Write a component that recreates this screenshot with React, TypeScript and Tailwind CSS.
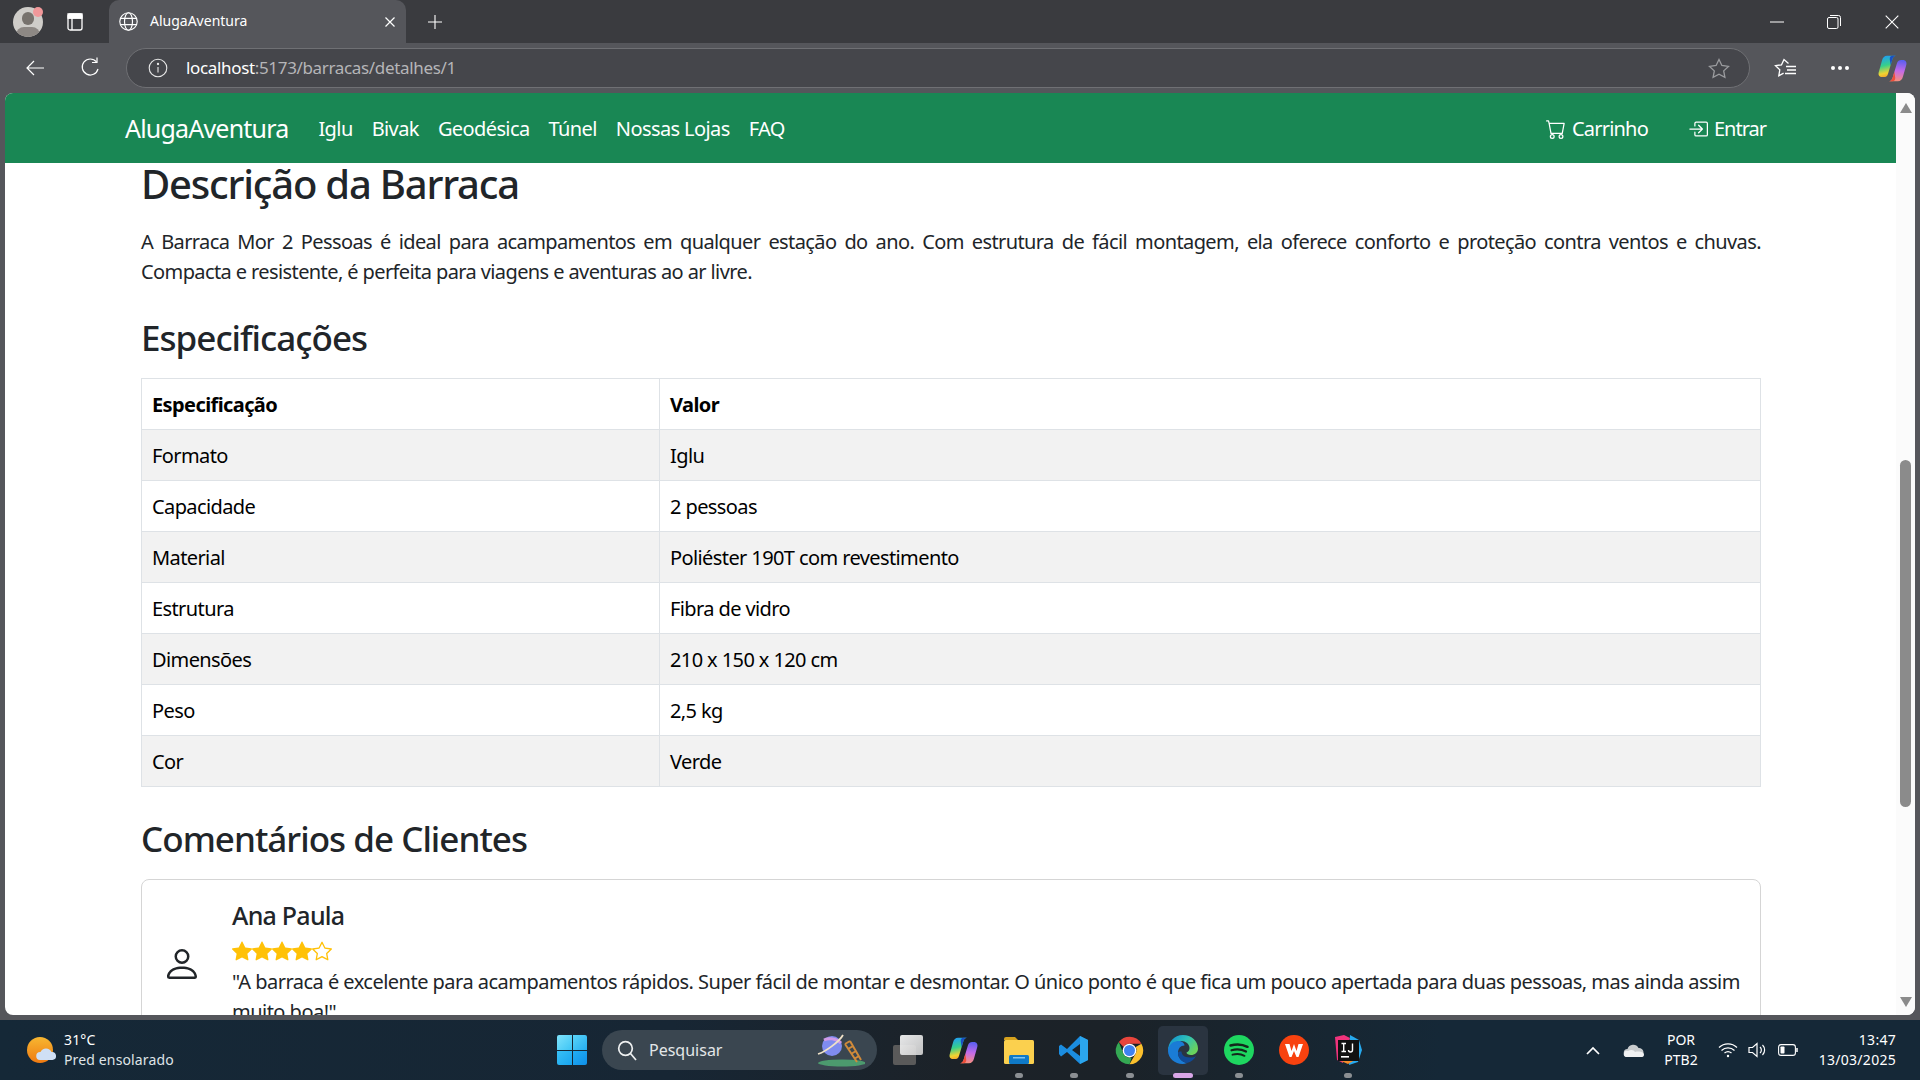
import { BsCart, BsBoxArrowInRight, BsPerson, BsStarFill, BsStar } from "react-icons/bs";

const rows = [
  ["Formato", "Iglu"],
  ["Capacidade", "2 pessoas"],
  ["Material", "Poliéster 190T com revestimento"],
  ["Estrutura", "Fibra de vidro"],
  ["Dimensões", "210 x 150 x 120 cm"],
  ["Peso", "2,5 kg"],
  ["Cor", "Verde"],
];

function Copilot({ size }: { size: number }) {
  return (
    <svg width={size} height={size} viewBox="0 0 32 32">
      <defs>
        <linearGradient id={`cpa${size}`} x1="0.3" y1="0" x2="0.5" y2="1">
          <stop offset="0" stopColor="#1f9df5" />
          <stop offset="0.45" stopColor="#37d08a" />
          <stop offset="0.8" stopColor="#f2d431" />
          <stop offset="1" stopColor="#f5a02a" />
        </linearGradient>
        <linearGradient id={`cpb${size}`} x1="0.5" y1="0" x2="0.4" y2="1">
          <stop offset="0" stopColor="#5a5ff0" />
          <stop offset="0.5" stopColor="#c46ae8" />
          <stop offset="1" stopColor="#f8907a" />
        </linearGradient>
      </defs>
      <path d="M10 2h10c-2 0-3.500 1.500-4.200 4L11 22c-.7 2.500-2.500 3.500-4.500 3.500H4.500C1.500 25.500 0 23 .8 20L4.500 7C5.400 3.800 7.200 2 10 2z" fill={`url(#cpa${size})`} />
      <path d="M22 30H12c2 0 3.500-1.500 4.200-4L21 10c.7-2.500 2.500-3.500 4.500-3.500h2c3 0 4.500 2.500 3.700 5.500l-3.700 13c-.9 3.200-2.700 5-5.500 5z" fill={`url(#cpb${size})`} />
      <path d="M12 30c2 0 3.500-1.500 4.200-4l1.800-6.500 1 6.500c.3 2.500-1 4-3 4z" fill="#ee4f3a" />
      <path d="M20 2c-2 0-3.500 1.500-4.200 4l-1.800 6.500-1-6.500c-.3-2.500 1-4 3-4z" fill="#1a50c4" />
    </svg>
  );
}

function Chrome({ size }: { size: number }) {
  return (
    <svg width={size} height={size} viewBox="0 0 48 48">
      <path d="M24 4a20 20 0 0 1 17.320 10H24a10 10 0 0 0-8.660 5L8.500 11.500A20 20 0 0 1 24 4z" fill="#e8453c" />
      <path d="M41.320 14A20 20 0 0 1 24 44l8.660-15A10 10 0 0 0 33 19z" fill="#fbc02d" />
      <path d="M24 44A20 20 0 0 1 8.500 11.500L15.340 29A10 10 0 0 0 24 34l3 .5z" fill="#34a853" />
      <circle cx="24" cy="24" r="10" fill="#fff" />
      <circle cx="24" cy="24" r="8" fill="#3f82f0" />
    </svg>
  );
}

function Edge({ size }: { size: number }) {
  return (
    <svg width={size} height={size} viewBox="0 0 32 32">
      <defs>
        <linearGradient id="eg1" x1="0" y1="0" x2="1" y2="0.6">
          <stop offset="0" stopColor="#0c8ad8" />
          <stop offset="0.55" stopColor="#2fc1b6" />
          <stop offset="1" stopColor="#6ad35c" />
        </linearGradient>
      </defs>
      <path d="M16 1c8.500 0 15 6 15 13.500 0 4-3.200 6.500-7 6.500-2.500 0-4.500-1-4.500-2.500 2-1 3-2.500 3-4.500 0-4-4-7-8-7C8 7 3 11 1 17 1 8 7 1 16 1z" fill="url(#eg1)" />
      <path d="M1 17c0-6 5-10 10.500-10 3 0 6 2 6 4.500-4 0-6.500 3-6.500 7.500 0 5 4 9 9 10-1.500.7-3 1-4.500 1C8 30 1 24 1 17z" fill="#1a7cd6" />
      <path d="M11 19c0 5 4 9 9 10 4-.8 7-3.500 9-7-1.500 1-3.500 1.500-6 1.500-6 0-8.500-3-8.500-6-2.500 0-3.500 0-3.500 1.500z" fill="#114a96" />
    </svg>
  );
}

function Tab() {
  return (
    <div className="relative ml-[18px] flex h-[43px] w-[297px] items-center rounded-t-[10px] bg-[#55565b] pl-[9px] pr-[8px] text-[14px] text-white">
      <svg width="21" height="21" viewBox="0 0 20 20" fill="none" stroke="#fff" strokeWidth="1.100">
        <circle cx="10" cy="10" r="8.300" />
        <ellipse cx="10" cy="10" rx="3.800" ry="8.300" />
        <path d="M2.300 7h15.400M2.300 13h15.400" />
      </svg>
      <span className="ml-[11px] flex-1 pb-[2px]">AlugaAventura</span>
      <svg width="12" height="12" viewBox="0 0 12 12" stroke="#fff" strokeWidth="1.200" className="mr-[2px]">
        <path d="M1.500 1.500l9 9M10.500 1.500l-9 9" />
      </svg>
    </div>
  );
}

function WinLogo() {
  return (
    <div className="grid h-[30px] w-[30px] grid-cols-2 gap-[1px]">
      <div className="rounded-tl-[2px] bg-[linear-gradient(135deg,#7fe3fb,#3cc4f5)]" />
      <div className="rounded-tr-[2px] bg-[linear-gradient(135deg,#5ad4f8,#25aef2)]" />
      <div className="rounded-bl-[2px] bg-[linear-gradient(135deg,#38c0f5,#18a4ef)]" />
      <div className="rounded-br-[2px] bg-[linear-gradient(135deg,#22aef3,#0f8fe8)]" />
    </div>
  );
}

function Dock({ children, w, dot, pink, active }: { children: React.ReactNode; w: number; dot?: boolean; pink?: boolean; active?: boolean }) {
  return (
    <div
      className={`relative flex h-[49px] shrink-0 items-center justify-center rounded-[5px] ${active ? "bg-[#2a3440]" : ""}`}
      style={{ width: w }}
    >
      {children}
      {dot && <span className="absolute bottom-[-3px] left-1/2 h-[5px] w-[8px] -translate-x-1/2 rounded-full bg-[#8b8f93]" />}
      {pink && <span className="absolute bottom-[-3px] left-1/2 h-[5px] w-[20px] -translate-x-1/2 rounded-full bg-[#d9a6e8]" />}
    </div>
  );
}

export default function App() {
  return (
    <div className="flex h-[1080px] w-[1920px] flex-col overflow-hidden bg-[#55565b] font-['Noto_Sans',sans-serif] text-[#212529]">
      {/* tab strip */}
      <div className="flex h-[43px] shrink-0 items-center bg-[#3a3b3f]">
        <div className="relative ml-[13px] h-[30px] w-[30px] overflow-hidden rounded-full bg-[#cfcdc9]">
          <div className="absolute left-[9px] top-[5px] h-[13px] w-[12px] rounded-full bg-[#77726d]" />
          <div className="absolute left-[3px] top-[20px] h-[16px] w-[24px] rounded-full bg-[#8d8884]" />
        </div>
        <div className="absolute left-[33px] top-[7px] h-[10px] w-[10px] rounded-full bg-[#f1989a]" />
        <div className="ml-[13px] flex w-[38px] justify-center">
          <svg width="16" height="18" viewBox="0 0 16 18" fill="none" stroke="#fff" strokeWidth="1.300">
            <rect x="1" y="1" width="14" height="16" rx="2" />
            <path d="M1 5h14M5 5v12" />
            <path d="M1 1h14v4H1z" fill="#fff" />
          </svg>
        </div>
        <div className="-ml-[3px]">
          <Tab />
        </div>
        <svg width="16" height="16" viewBox="0 0 16 16" stroke="#fff" strokeWidth="1.100" className="ml-[21px]">
          <path d="M8 1v14M1 8h14" />
        </svg>
        <div className="ml-auto flex items-center pr-[21px]">
          <svg width="14" height="2" viewBox="0 0 14 2" stroke="#fff" className="mr-[43px]">
            <path d="M0 1h14" />
          </svg>
          <svg width="14" height="14" viewBox="0 0 14 14" fill="none" stroke="#fff" className="mr-[44px]">
            <rect x="0.500" y="2.500" width="10.500" height="11" rx="1.500" />
            <path d="M3 .5h8.500a2 2 0 0 1 2 2V11" />
          </svg>
          <svg width="14" height="14" viewBox="0 0 14 14" stroke="#fff" strokeWidth="1.100">
            <path d="M.7.7l12.600 12.600M13.300.7L.7 13.300" />
          </svg>
        </div>
      </div>

      {/* toolbar */}
      <div className="flex h-[50px] shrink-0 items-center bg-[#55565b]">
        <svg width="20" height="18" viewBox="0 0 20 18" fill="none" stroke="#fff" strokeWidth="1.200" className="ml-[25px]">
          <path d="M19 9H2M9 2L2 9l7 7" />
        </svg>
        <svg width="20" height="22" viewBox="0 0 20 22" fill="none" stroke="#fff" strokeWidth="1.200" className="ml-[35px]">
          <path d="M16.500 5A8 8 0 1 0 18 12" />
          <path d="M12 5.500h5V.5" />
        </svg>
        <div className="ml-[26px] flex h-[40px] w-[1624px] items-center rounded-full border border-[#6f7074] bg-[#45464b] text-[17px] tracking-[-0.02em]">
          <svg width="20" height="20" viewBox="0 0 20 20" fill="none" stroke="#e8e8e8" strokeWidth="1.100" className="ml-[21px]">
            <circle cx="10" cy="10" r="8.800" />
            <path d="M10 9v5.500" />
            <circle cx="10" cy="6" r=".6" fill="#fff" />
          </svg>
          <span className="ml-[18px] flex-1 pb-[2px] leading-none">
            <span className="text-white">localhost</span>
            <span className="text-[#b5b5b8]">:5173/barracas/detalhes/1</span>
          </span>
          <svg width="22" height="21" viewBox="0 0 22 21" fill="none" stroke="#9b9c9f" strokeWidth="1.300" className="mr-[19px]">
            <path d="M11 1.500l2.900 6 6.600.9-4.800 4.500 1.200 6.500-5.900-3.200-5.900 3.200 1.200-6.500L1.500 8.400l6.600-.9z" />
          </svg>
        </div>
        <svg width="24" height="20" viewBox="0 0 24 20" fill="none" stroke="#fff" strokeWidth="1.300" className="ml-[24px]">
          <path d="M14.500 5.500L10 1.500 7.500 6.800 1.500 7.600l4.300 4.200-1 6 4.800-2.700" />
          <path d="M12 8.500h10M13 12h9M11 15.500h11" />
        </svg>
        <div className="ml-[33px] flex gap-[3px]">
          <span className="h-[4px] w-[4px] rounded-full bg-white" />
          <span className="h-[4px] w-[4px] rounded-full bg-white" />
          <span className="h-[4px] w-[4px] rounded-full bg-white" />
        </div>
        <div className="ml-[29px]">
          <Copilot size={29} />
        </div>
      </div>

      {/* page */}
      <div className="mx-[5px] flex h-[922px] shrink-0 overflow-hidden rounded-[8px] bg-white">
        <div className="flex min-w-0 flex-1 flex-col">
          <nav className="flex h-[70px] shrink-0 items-center bg-[#198754] pl-[120px] pr-[130px] pt-[2px] text-[20px] tracking-[-0.03em] text-white">
            <span className="text-[25px] tracking-[-0.032em]">AlugaAventura</span>
            <div className="ml-[30px] flex gap-[19px]">
              <span>Iglu</span>
              <span>Bivak</span>
              <span>Geodésica</span>
              <span>Túnel</span>
              <span>Nossas Lojas</span>
              <span>FAQ</span>
            </div>
            <div className="ml-auto flex items-center">
              <BsCart size={20} />
              <span className="ml-[6px] tracking-[-0.04em]">Carrinho</span>
              <BsBoxArrowInRight size={20} className="ml-[40px]" />
              <span className="ml-[6px] tracking-[-0.05em]">Entrar</span>
            </div>
          </nav>
          <main className="min-h-0 flex-1 overflow-hidden pl-[136px] pr-[135px] text-[20px] leading-[30px] tracking-[-0.03em]">
            <h2 className="-mt-[3px] text-[40px] font-[550] leading-[48px] tracking-[-0.03em]">Descrição da Barraca</h2>
            <p className="mt-[19px] text-justify">
              A Barraca Mor 2 Pessoas é ideal para acampamentos em qualquer estação do ano. Com estrutura de fácil montagem, ela oferece conforto e proteção contra ventos e chuvas. Compacta e resistente, é perfeita para viagens e aventuras ao ar livre.
            </p>
            <h3 className="mt-[30px] text-[35px] font-[550] leading-[42px] tracking-[-0.028em]">Especificações</h3>
            <table className="mt-[19px] w-full border-collapse border border-[#dee2e6] text-black">
              <thead>
                <tr className="h-[51px]">
                  <th className="w-[518px] border border-[#dee2e6] px-[10px] pt-[2px] text-left font-bold">Especificação</th>
                  <th className="border border-[#dee2e6] px-[10px] pt-[2px] text-left font-bold">Valor</th>
                </tr>
              </thead>
              <tbody>
                {rows.map(([a, b], i) => (
                  <tr key={a} className={`h-[51px] ${i % 2 === 0 ? "bg-[#f2f2f2]" : "bg-white"}`}>
                    <td className="border border-[#dee2e6] px-[10px] pt-[2px]">{a}</td>
                    <td className="border border-[#dee2e6] px-[10px] pt-[2px]">{b}</td>
                  </tr>
                ))}
              </tbody>
            </table>
            <h3 className="mt-[31px] text-[35px] font-[550] leading-[42px] tracking-[-0.028em]">Comentários de Clientes</h3>
            <div className="mt-[19px] flex items-center rounded-[8px] border border-[#d5d5d5] px-[20px] py-[20px]">
              <BsPerson size={40} className="mr-[30px] shrink-0" />
              <div>
                <h5 className="text-[25px] font-[550] leading-[30px] tracking-[-0.03em]">Ana Paula</h5>
                <div className="mt-[8px] flex h-[25px] items-center text-[#ffc107]">
                  <BsStarFill size={20} />
                  <BsStarFill size={20} />
                  <BsStarFill size={20} />
                  <BsStarFill size={20} />
                  <BsStar size={20} />
                </div>
                <p className="mt-[4px] tracking-[-0.026em]">"A barraca é excelente para acampamentos rápidos. Super fácil de montar e desmontar. O único ponto é que fica um pouco apertada para duas pessoas, mas ainda assim muito boa!"</p>
              </div>
            </div>
          </main>
        </div>
        <div className="relative w-[19px] shrink-0 bg-[#fbfbfb]">
          <div className="absolute left-[4px] top-[10px] h-0 w-0 border-x-[6px] border-b-[10px] border-x-transparent border-b-[#8b8b8b]" />
          <div className="absolute left-[4px] top-[367px] h-[347px] w-[11px] rounded-full bg-[#8b8b8b]" />
          <div className="absolute bottom-[8px] left-[4px] h-0 w-0 border-x-[6px] border-t-[10px] border-x-transparent border-t-[#8b8b8b]" />
        </div>
      </div>

      {/* taskbar */}
      <div className="mt-[5px] flex h-[60px] shrink-0 items-center bg-[linear-gradient(90deg,#152837_0%,#172634_35%,#1c2228_50%,#1b2228_58%,#152837_75%,#152837_100%)] text-white">
        <svg width="30" height="30" viewBox="0 0 30 30" className="ml-[26px] shrink-0">
          <defs>
            <linearGradient id="sun" x1="0" y1="0" x2="0" y2="1">
              <stop offset="0" stopColor="#f7b731" />
              <stop offset="1" stopColor="#ef7a12" />
            </linearGradient>
          </defs>
          <circle cx="14" cy="15" r="13" fill="url(#sun)" />
          <path d="M14 25a4 4 0 0 1 .5-8 6 6 0 0 1 11 0 4 4 0 0 1 1 8z" fill="#cfdff5" />
        </svg>
        <div className="ml-[8px] w-[130px] text-[14px] leading-[20px] tracking-[0.01em]">
          <div>31°C</div>
          <div className="text-[#dfe3e6]">Pred ensolarado</div>
        </div>
        <div className="ml-[363px]">
          <WinLogo />
        </div>
        <div className="ml-[15px] flex h-[40px] w-[275px] items-center rounded-full bg-[#3a4650] pl-[15px] text-[16px] text-[#e3e6e8]">
          <svg width="20" height="21" viewBox="0 0 20 21" fill="none" stroke="#eef0f1" strokeWidth="1.700">
            <circle cx="8.500" cy="8.500" r="6.800" />
            <path d="M13.500 13.500L19 20" />
          </svg>
          <span className="ml-[12px] flex-1">Pesquisar</span>
          <svg width="50" height="40" viewBox="0 0 50 40" className="mr-[12px]">
            <ellipse cx="27" cy="33" rx="24" ry="3.500" fill="#4c9a6e" />
            <circle cx="17" cy="16" r="10" fill="#7f8cf0" />
            <path d="M9 10c4-2 12-2 17 3" stroke="#cf9ae8" strokeWidth="3" fill="none" />
            <path d="M3 24C10 22 24 12 28 5" stroke="#f0e2c8" strokeWidth="1.800" fill="none" />
            <path d="M30 14l12 18M35 11l11 19M30 14l5-3M33 19l5-3M36 24l5-3M39 29l5-3" stroke="#d08a3a" strokeWidth="2" fill="none" />
          </svg>
        </div>
        <div className="ml-[3px] flex items-center">
          <Dock w={56}>
            <div className="relative h-[30px] w-[30px]">
              <div className="absolute bottom-0 left-0 h-[20px] w-[23px] rounded-[2px] bg-[#5a5a5a]" />
              <div className="absolute right-0 top-0 h-[20px] w-[23px] rounded-[2px] bg-[linear-gradient(135deg,#fdfdfd,#d4d4d4)] opacity-90" />
            </div>
          </Dock>
          <Dock w={55}>
            <Copilot size={29} />
          </Dock>
          <Dock w={55} dot>
            <svg width="30" height="28" viewBox="0 0 30 28">
              <path d="M0 3a2 2 0 0 1 2-2h9l3 3h-14z" fill="#d6a21e" />
              <rect x="0" y="4" width="30" height="24" rx="1.500" fill="#fbd04e" />
              <rect x="5" y="19" width="20" height="9" rx="1.500" fill="#0f7ac8" />
              <rect x="9" y="21" width="12" height="1.500" fill="#7ec4f0" />
            </svg>
          </Dock>
          <Dock w={55} dot>
            <svg width="30" height="30" viewBox="0 0 30 30">
              <path d="M21 1l8 4v20l-8 4-13-12-6 4.500L0 19v-8l2-1.500 6 4.500zM21 9l-8 6 8 6z" fill="#1b8de0" fillRule="evenodd" />
              <path d="M21 1l8 4v20l-8 4z" fill="#2ba6ee" />
            </svg>
          </Dock>
          <Dock w={57} dot>
            <Chrome size={33} />
          </Dock>
          <Dock w={50} dot={false} pink active>
            <Edge size={32} />
          </Dock>
          <Dock w={61} dot>
            <svg width="30" height="30" viewBox="0 0 30 30" fill="none">
              <circle cx="15" cy="15" r="15" fill="#1ed760" />
              <path d="M6.500 10.500c6-1.800 12-1.300 17 1.300" stroke="#14271c" strokeWidth="2.500" strokeLinecap="round" />
              <path d="M7.500 15.300c5-1.400 10-1 14.500 1.300" stroke="#14271c" strokeWidth="2.200" strokeLinecap="round" />
              <path d="M8.500 19.700c4-1 8.500-.8 12 1.100" stroke="#14271c" strokeWidth="1.900" strokeLinecap="round" />
            </svg>
          </Dock>
          <Dock w={50}>
            <svg width="30" height="30" viewBox="0 0 30 30" fill="none">
              <circle cx="15" cy="15" r="15" fill="#f8420f" />
              <path d="M6 9h4.500l2 7 2.500-7 2.500 7 2-7H24l-4.500 13h-2L15 16l-2.500 6h-2z" fill="#fff" />
            </svg>
          </Dock>
          <Dock w={58} dot>
            <svg width="30" height="30" viewBox="0 0 30 30">
              <path d="M2 2l9-2 6 3-7 25-6-3z" fill="#f0337c" />
              <path d="M17 0l9 5 3 10-4 12-9 3z" fill="#27a9ee" />
              <path d="M8 26l7 3 7-4-7-4z" fill="#f58b2a" />
              <rect x="5" y="5" width="21" height="21" fill="#111" />
              <rect x="8" y="21" width="8" height="1.600" fill="#fff" />
              <path d="M8.500 8.500h4.500M10.700 8.500v8M8.500 16.500h4.500M19.500 8.500v6.500a2 2 0 0 1-4 0" stroke="#fff" strokeWidth="1.400" fill="none" />
            </svg>
          </Dock>
        </div>
        <div className="ml-auto flex items-center pr-[24px]">
          <svg width="14" height="9" viewBox="0 0 14 9" fill="none" stroke="#fff" strokeWidth="1.700" className="mr-[1px]">
            <path d="M1 8l6-6 6 6" />
          </svg>
          <svg width="21" height="14" viewBox="0 0 21 14" className="ml-[22px]">
            <path d="M5 14a4 4 0 0 1-.5-8 6 6 0 0 1 11-1 4.500 4.500 0 0 1 1 9z" fill="#c9ccce" />
            <path d="M3 14a3 3 0 0 1 2-6c3-2 6-1 7 1 4-1 9 0 9 2.500 0 2-1 2.500-3 2.500z" fill="#f0f1f2" />
          </svg>
          <div className="ml-[9px] w-[56px] text-center text-[14px] leading-[20px]">
            <div>POR</div>
            <div>PTB2</div>
          </div>
          <svg width="20" height="16" viewBox="0 0 20 16" fill="none" stroke="#fff" strokeWidth="1.300" className="ml-[9px]">
            <path d="M1 5.500a13 13 0 0 1 18 0M3.500 8.500a9.500 9.500 0 0 1 13 0M6.500 11a5.500 5.500 0 0 1 7 0" />
            <circle cx="10" cy="14" r="1.200" fill="#fff" stroke="none" />
          </svg>
          <svg width="20" height="16" viewBox="0 0 20 16" fill="none" stroke="#fff" strokeWidth="1.200" className="ml-[10px]">
            <path d="M1 5.500h3.500L9 1.500v13l-4.500-4H1z" />
            <path d="M12 5a4 4 0 0 1 0 6M14.500 3a7 7 0 0 1 0 10" />
          </svg>
          <svg width="20" height="12" viewBox="0 0 20 12" fill="none" stroke="#fff" strokeWidth="1.100" className="ml-[10px]">
            <rect x=".6" y=".6" width="16.800" height="10.800" rx="2.500" />
            <rect x="2.500" y="2.500" width="4" height="7" fill="#fff" stroke="none" rx=".8" />
            <path d="M19 4v4" strokeWidth="1.500" />
          </svg>
          <div className="ml-[13px] w-[85px] text-right text-[14px] leading-[20px] tracking-[0.02em]">
            <div>13:47</div>
            <div>13/03/2025</div>
          </div>
        </div>
      </div>
    </div>
  );
}
